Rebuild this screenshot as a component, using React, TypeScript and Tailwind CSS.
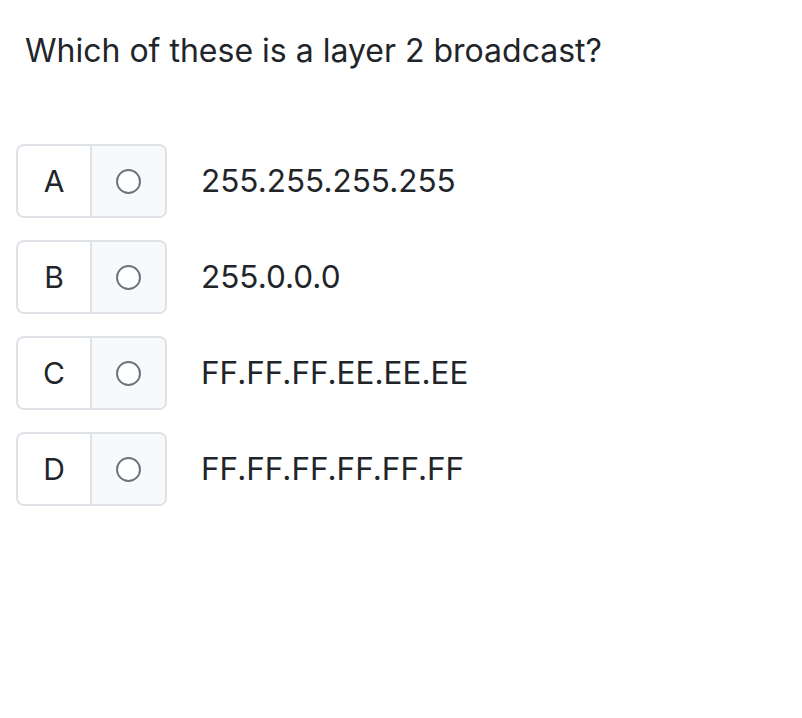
import { useState } from 'react';

const OPTIONS = [
  { key: 'A', text: '255.255.255.255' },
  { key: 'B', text: '255.0.0.0' },
  { key: 'C', text: 'FF.FF.FF.EE.EE.EE' },
  { key: 'D', text: 'FF.FF.FF.FF.FF.FF' },
];

export default function App() {
  const [picked, setPicked] = useState<string | null>(null);

  return (
    <div className="min-h-screen bg-white px-4 pt-[31px] text-[#212529]" style={{ fontFamily: 'Inter, "Liberation Sans", sans-serif' }}>
      <h1 className="pl-[9px] text-[32px] leading-[40px]">Which of these is a layer 2 broadcast?</h1>

      <div className="mt-[73px] flex flex-col gap-[22px]">
        {OPTIONS.map((o) => (
          <label key={o.key} className="flex cursor-pointer items-center" onClick={() => setPicked(o.key)}>
            <div className="flex h-[74px] w-[151px] overflow-hidden rounded-lg border-2 border-[#dee2e6]">
              <div className="flex w-[72px] items-center justify-center text-[30px]">{o.key}</div>
              <div className="flex flex-1 items-center justify-center border-l-2 border-[#dee2e6] bg-[#f8f9fa]">
                <span className={['block h-[25px] w-[25px] rounded-full border-2 border-[#6c757d]', picked === o.key ? 'bg-[#6c757d]' : 'bg-white'].join(' ')} />
              </div>
            </div>
            <span className="ml-[34px] text-[31.5px]">{o.text}</span>
          </label>
        ))}
      </div>
    </div>
  );
}
